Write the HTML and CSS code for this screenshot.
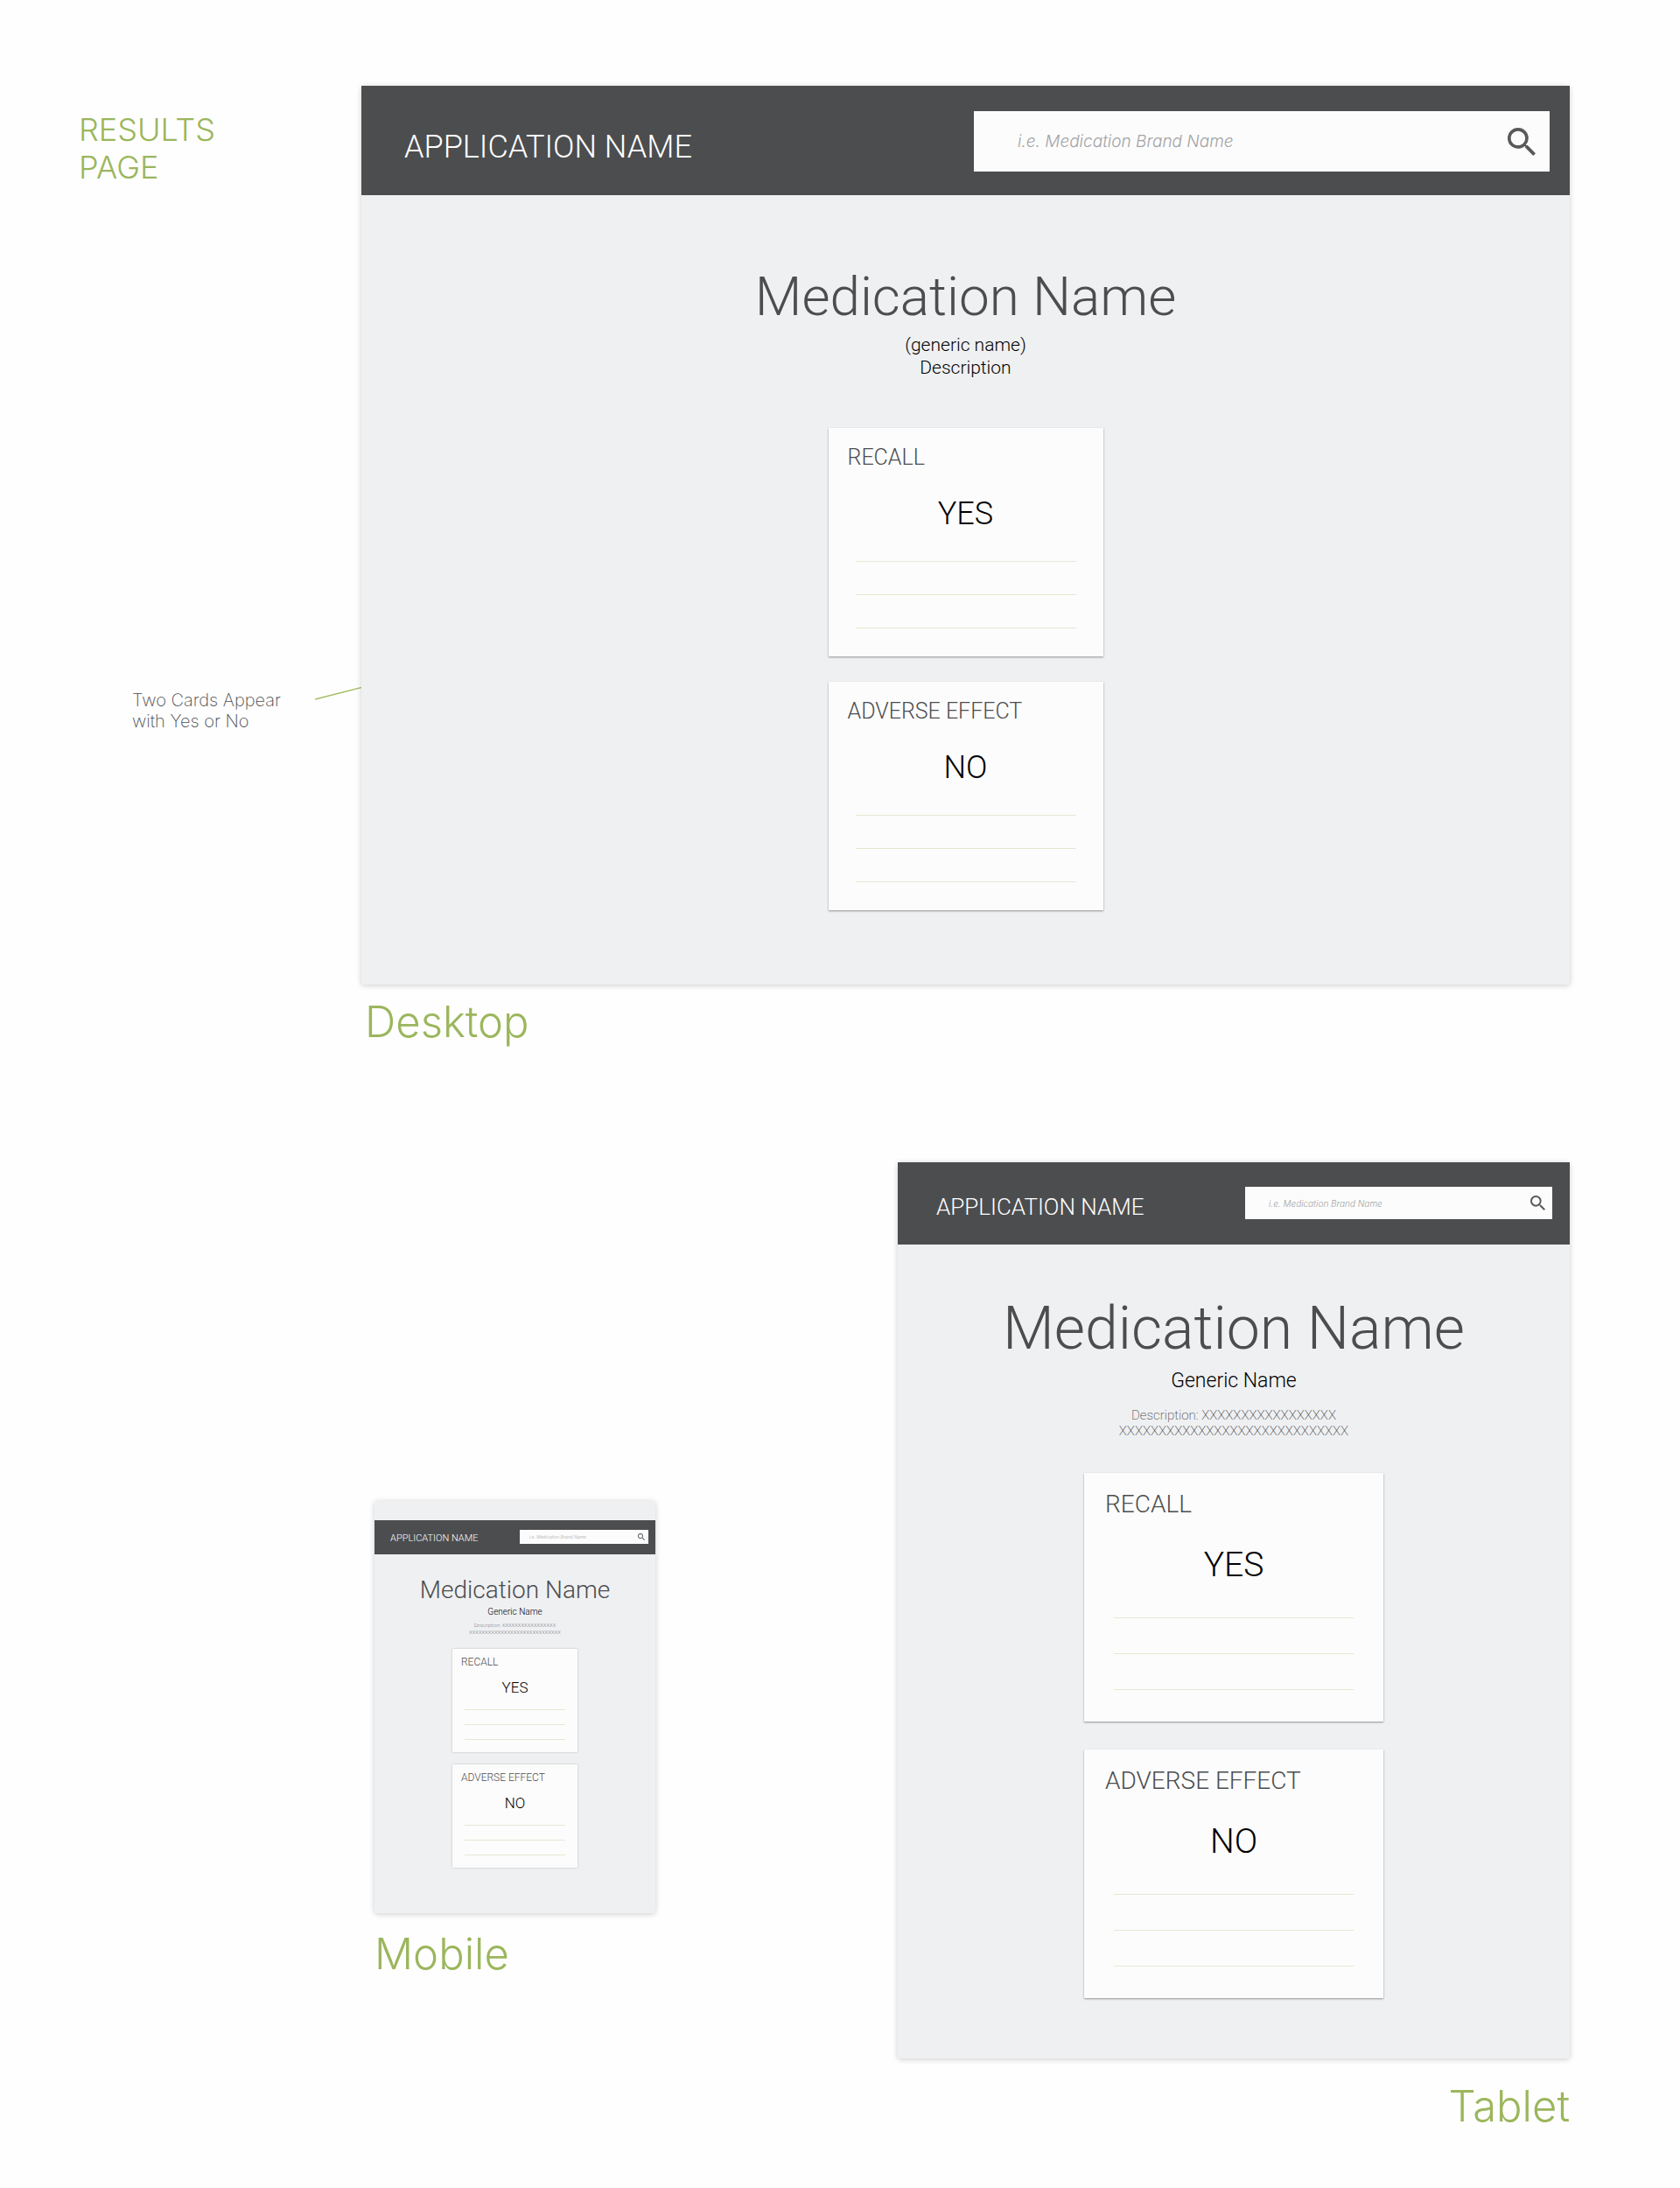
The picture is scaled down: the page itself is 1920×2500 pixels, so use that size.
FILE: index.html
```html
<!DOCTYPE html>
<html lang="en">
<head>
<meta charset="utf-8">
<meta name="viewport" content="width=device-width, initial-scale=1">
<title>Results Page</title>
<link rel="stylesheet" href="styles.css">
</head>
<body>
<main class="board">
  <aside class="notes">
    <h1 class="board-title">RESULTS<br>PAGE</h1>
    <div class="callout">
      <p class="callout-text">Two Cards Appear<br>with Yes or No</p>
      <svg class="callout-line" width="53" height="15" viewBox="0 0 53 15" aria-hidden="true"><path d="M0 14L53 .5" fill="none" stroke="#a3bd5f" stroke-width="1.3"/></svg>
    </div>
  </aside>

  <figure class="device desktop">
    <div class="screen">
      <header class="bar">
        <p class="brand">APPLICATION NAME</p>
        <form class="search">
          <input class="field" type="text" aria-label="Search medication" placeholder="i.e. Medication Brand Name">
          <button class="go" type="button" aria-label="Search"><svg class="glass" viewBox="3 3 17.5 17.5" aria-hidden="true"><path d="M15.5 14h-.79l-.28-.27A6.47 6.47 0 0 0 16 9.5 6.5 6.5 0 1 0 9.500 16c1.610 0 3.090-.59 4.230-1.570l.27.28v.79l5 4.990L20.490 19l-4.990-5zm-6 0C7.010 14 5 11.990 5 9.500S7.010 5 9.500 5 14 7.010 14 9.500 11.990 14 9.500 14z"/></svg></button>
        </form>
      </header>
      <section class="result">
        <h2 class="name">Medication Name</h2>
        <p class="generic">(generic name)<br>Description</p>
        <div class="cards">
          <article class="card"><h3 class="card-title">RECALL</h3><p class="answer">YES</p><div class="rules"><hr><hr><hr></div></article>
          <article class="card"><h3 class="card-title">ADVERSE EFFECT</h3><p class="answer">NO</p><div class="rules"><hr><hr><hr></div></article>
        </div>
      </section>
    </div>
    <figcaption class="label">Desktop</figcaption>
  </figure>

  <div class="small-devices">
    <figure class="device mobile">
      <div class="screen">
        <header class="bar">
          <p class="brand">APPLICATION NAME</p>
          <form class="search">
            <input class="field" type="text" aria-label="Search medication" placeholder="i.e. Medication Brand Name">
            <button class="go" type="button" aria-label="Search"><svg class="glass" viewBox="3 3 17.5 17.5" aria-hidden="true"><path d="M15.5 14h-.79l-.28-.27A6.47 6.47 0 0 0 16 9.5 6.5 6.5 0 1 0 9.500 16c1.610 0 3.090-.59 4.230-1.570l.27.28v.79l5 4.990L20.490 19l-4.990-5zm-6 0C7.010 14 5 11.990 5 9.500S7.010 5 9.500 5 14 7.010 14 9.500 11.990 14 9.500 14z"/></svg></button>
          </form>
        </header>
        <section class="result">
          <h2 class="name">Medication Name</h2>
          <p class="generic">Generic Name</p>
          <p class="description">Description: XXXXXXXXXXXXXXXXX<br>XXXXXXXXXXXXXXXXXXXXXXXXXXXXX</p>
          <div class="cards">
            <article class="card"><h3 class="card-title">RECALL</h3><p class="answer">YES</p><div class="rules"><hr><hr><hr></div></article>
            <article class="card"><h3 class="card-title">ADVERSE EFFECT</h3><p class="answer">NO</p><div class="rules"><hr><hr><hr></div></article>
          </div>
        </section>
      </div>
      <figcaption class="label">Mobile</figcaption>
    </figure>

    <figure class="device tablet">
      <div class="screen">
        <header class="bar">
          <p class="brand">APPLICATION NAME</p>
          <form class="search">
            <input class="field" type="text" aria-label="Search medication" placeholder="i.e. Medication Brand Name">
            <button class="go" type="button" aria-label="Search"><svg class="glass" viewBox="3 3 17.5 17.5" aria-hidden="true"><path d="M15.5 14h-.79l-.28-.27A6.47 6.47 0 0 0 16 9.5 6.5 6.5 0 1 0 9.500 16c1.610 0 3.090-.59 4.230-1.570l.27.28v.79l5 4.990L20.490 19l-4.990-5zm-6 0C7.010 14 5 11.990 5 9.500S7.010 5 9.500 5 14 7.010 14 9.500 11.990 14 9.500 14z"/></svg></button>
          </form>
        </header>
        <section class="result">
          <h2 class="name">Medication Name</h2>
          <p class="generic">Generic Name</p>
          <p class="description">Description: XXXXXXXXXXXXXXXXX<br>XXXXXXXXXXXXXXXXXXXXXXXXXXXXX</p>
          <div class="cards">
            <article class="card"><h3 class="card-title">RECALL</h3><p class="answer">YES</p><div class="rules"><hr><hr><hr></div></article>
            <article class="card"><h3 class="card-title">ADVERSE EFFECT</h3><p class="answer">NO</p><div class="rules"><hr><hr><hr></div></article>
          </div>
        </section>
      </div>
      <figcaption class="label">Tablet</figcaption>
    </figure>
  </div>
</main>
</body>
</html>
```

FILE: styles.css
```css
:root {
  --green: #9bb65c;
  --ink: #4c4d4f;
  --screen: #eff0f2;
  --card: #fcfcfc;
}

*, *::before, *::after { box-sizing: border-box; }

body {
  margin: 0;
  background: #fefefe;
  color: var(--ink);
  font-family: Roboto, sans-serif;
  font-weight: 300;
}

h1, h2, h3, p, figure, hr { margin: 0; font-weight: 300; }

.board {
  display: grid;
  grid-template-columns: 323px minmax(0, 1fr);
  padding: 98px 126px 60px 90px;
}

/* Annotations */
.notes { font-family: Inter, sans-serif; }

.board-title {
  padding-top: 29px;
  color: var(--green);
  font-size: 36px;
  line-height: 43px;
}

.callout {
  display: flex;
  justify-content: space-between;
  align-items: flex-start;
  margin-top: 572px;
  padding-left: 61px;
}

.callout-text {
  padding-top: 3px;
  font-size: 20px;
  line-height: 24px;
  font-weight: 200;
}

/* Devices */
.screen {
  background: var(--screen);
  border-radius: 3px;
  box-shadow: 0 1px 6px rgba(0, 0, 0, .2);
}

.bar {
  display: flex;
  justify-content: space-between;
  align-items: flex-start;
  padding: var(--bar-pad);
  background: var(--ink);
}

.brand {
  padding-top: var(--brand-drop);
  color: #fff;
  font-size: var(--brand-size);
  line-height: var(--brand-line);
  white-space: nowrap;
}

.search {
  display: flex;
  align-items: center;
  width: var(--search-width);
  height: var(--search-height);
  padding: var(--search-pad);
  background: var(--card);
}

.field {
  flex: 1;
  min-width: 0;
  padding: 0;
  border: 0;
  outline: 0;
  background: none;
  color: var(--ink);
  font: italic 300 var(--field-size) Inter, sans-serif;
}

.field::placeholder { color: #a3a4a6; opacity: 1; }

.go {
  display: flex;
  padding: 0;
  border: 0;
  background: none;
}

.glass {
  width: var(--glass);
  height: var(--glass);
  fill: #58595b;
}

.result {
  display: flex;
  flex-direction: column;
  align-items: center;
  padding: var(--result-pad);
  text-align: center;
}

.name {
  font-size: var(--name-size);
  line-height: var(--name-line);
}

.generic {
  margin-top: var(--generic-gap);
  color: #000;
  font-size: var(--generic-size);
  line-height: var(--generic-line);
}

.description {
  margin-top: var(--desc-gap);
  font-size: var(--desc-size);
  line-height: var(--desc-line);
  font-weight: 200;
}

.cards {
  display: flex;
  flex-direction: column;
  gap: var(--cards-gap);
  width: var(--card-width);
  max-width: 100%;
  margin-top: var(--cards-top);
}

.card {
  padding: var(--card-pad);
  background: var(--card);
  box-shadow: 0 1px 2px rgba(0, 0, 0, .4);
}

.card-title {
  font-size: var(--card-title-size);
  line-height: var(--card-title-line);
  text-align: left;
}

.answer {
  margin-top: var(--answer-gap);
  color: #000;
  font-size: var(--answer-size);
  line-height: var(--answer-line);
}

.rules {
  display: flex;
  flex-direction: column;
  gap: var(--rule-gap);
  margin-top: var(--rules-top);
  padding: 0 var(--rule-inset);
}

.rules hr {
  width: 100%;
  height: 1px;
  border: 0;
  background: #e5e8d2;
}

.label {
  margin-top: var(--label-gap);
  color: var(--green);
  font-family: Inter, sans-serif;
  font-size: 49px;
  line-height: 60px;
}

.desktop {
  --bar-pad: 29px 23px 27px 49px;
  --brand-drop: 19px;
  --brand-size: 36px;
  --brand-line: 44px;
  --search-width: 658px;
  --search-height: 69px;
  --search-pad: 0 16px 0 50px;
  --field-size: 19px;
  --glass: 32px;
  --result-pad: 80px 20px 85px;
  --name-size: 62px;
  --name-line: 72px;
  --generic-gap: 6px;
  --generic-size: 21px;
  --generic-line: 26px;
  --cards-top: 56px;
  --cards-gap: 29px;
  --card-width: 314px;
  --card-pad: 19px 22px 32px;
  --card-title-size: 25px;
  --card-title-line: 30px;
  --answer-gap: 27px;
  --answer-size: 36px;
  --answer-line: 44px;
  --rules-top: 32px;
  --rule-gap: 37px;
  --rule-inset: 9px;
  --label-gap: 13px;
}

.desktop .label { padding-left: 4px; }

.small-devices {
  display: flex;
  flex-wrap: wrap;
  justify-content: space-between;
  align-items: flex-start;
  grid-column: 2;
  margin-top: 130px;
  padding-left: 15px;
}

.mobile {
  --bar-pad: 11px 8px 11px 18px;
  --brand-drop: 3px;
  --brand-size: 11px;
  --brand-line: 14px;
  --search-width: 147px;
  --search-height: 16px;
  --search-pad: 0 4px 0 11px;
  --field-size: 5px;
  --glass: 8px;
  --result-pad: 24px 8px 52px;
  --name-size: 28px;
  --name-line: 34px;
  --generic-gap: 2px;
  --generic-size: 10px;
  --generic-line: 12px;
  --desc-gap: 5px;
  --desc-size: 6px;
  --desc-line: 8px;
  --cards-top: 15px;
  --cards-gap: 14px;
  --card-width: 143px;
  --card-pad: 8px 10px 14px;
  --card-title-size: 12px;
  --card-title-line: 14px;
  --answer-gap: 12px;
  --answer-size: 17px;
  --answer-line: 20px;
  --rules-top: 15px;
  --rule-gap: 16px;
  --rule-inset: 4px;
  --label-gap: 17px;
  width: 321px;
  margin-top: 387px;
}

.mobile .screen { padding-top: 22px; }
.mobile .card { box-shadow: 0 0 2px rgba(0, 0, 0, .25); }

.tablet {
  --bar-pad: 28px 20px 27px 44px;
  --brand-drop: 7px;
  --brand-size: 26px;
  --brand-line: 32px;
  --search-width: 351px;
  --search-height: 37px;
  --search-pad: 0 8px 0 27px;
  --field-size: 10px;
  --glass: 17px;
  --result-pad: 56px 20px 69px;
  --name-size: 68px;
  --name-line: 80px;
  --generic-gap: 6px;
  --generic-size: 23px;
  --generic-line: 28px;
  --desc-gap: 16px;
  --desc-size: 15px;
  --desc-line: 18px;
  --cards-top: 39px;
  --cards-gap: 32px;
  --card-width: 342px;
  --card-pad: 20px 24px 36px;
  --card-title-size: 28px;
  --card-title-line: 32px;
  --answer-gap: 29px;
  --answer-size: 39px;
  --answer-line: 48px;
  --rules-top: 36px;
  --rule-gap: 40px;
  --rule-inset: 10px;
  --label-gap: 25px;
  flex: 0 1 768px;
}

.tablet .label { text-align: right; }

@media (max-width: 1500px) {
  .board { grid-template-columns: minmax(0, 1fr); padding: 40px; }
  .callout { margin: 24px 0; padding-left: 0; }
  .callout-line { display: none; }
  .search { flex: 0 1 var(--search-width); margin-left: 16px; }
  .small-devices { grid-column: 1; margin-top: 60px; padding-left: 0; gap: 40px; }
  .mobile { margin-top: 0; }
}
```
